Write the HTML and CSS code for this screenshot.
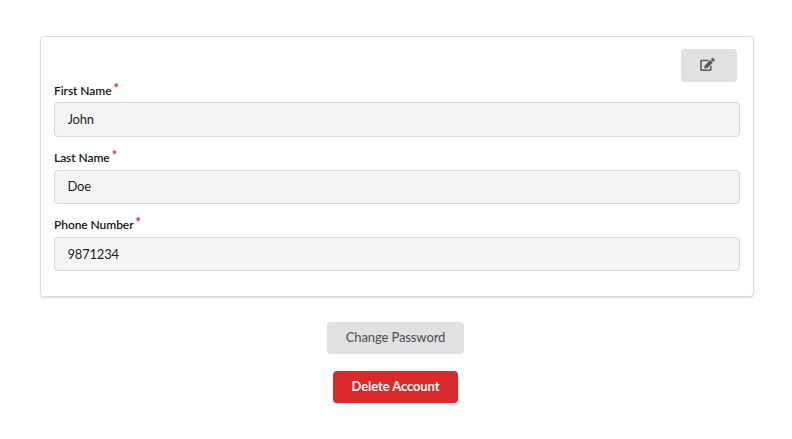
FILE: index.html
```html
<!DOCTYPE html>
<html lang="en">
<head>
<meta charset="utf-8">
<title>Account</title>
<link rel="stylesheet" href="styles.css">
</head>
<body>
<main class="page">
  <form class="card">
    <button type="button" class="button edit" aria-label="Edit">
      <svg class="icon" viewBox="0 0 576 512"><path d="M402.6 83.2l90.200 90.200c3.800 3.800 3.800 10 0 13.800L274.400 405.600l-92.800 10.300c-12.400 1.400-22.900-9.100-21.500-21.500l10.300-92.800L388.800 83.200c3.800-3.800 10-3.800 13.800 0zm162-22.900l-48.800-48.800c-15.200-15.200-39.900-15.200-55.200 0l-35.400 35.400c-3.800 3.800-3.800 10 0 13.800l90.200 90.200c3.800 3.800 10 3.800 13.800 0l35.400-35.400c15.200-15.300 15.200-40 0-55.200zM384 346.200V448H64V128h229.800c3.200 0 6.200-1.300 8.500-3.500l40-40c7.600-7.600 2.200-20.500-8.500-20.500H48C21.500 64 0 85.500 0 112v352c0 26.500 21.500 48 48 48h352c26.500 0 48-21.500 48-48V306.200c0-10.700-12.900-16-20.500-8.500l-40 40c-2.200 2.300-3.500 5.300-3.500 8.500z"/></svg>
    </button>
    <div class="field first">
      <label for="first">First Name<span class="required">*</span></label>
      <input id="first" value="John" readonly>
    </div>
    <div class="field">
      <label for="last">Last Name<span class="required">*</span></label>
      <input id="last" class="raised" value="Doe" readonly>
    </div>
    <div class="field">
      <label for="phone">Phone Number<span class="required">*</span></label>
      <input id="phone" value="9871234" readonly>
    </div>
  </form>
  <button type="button" class="button change">Change Password</button>
  <button type="button" class="button danger">Delete Account</button>
</main>
</body>
</html>
```
FILE: styles.css
```css
* { box-sizing: border-box; }
body { margin: 0; background: #fff; font-family: Lato, sans-serif; font-size: 13px; }
.page { display: flex; flex-direction: column; align-items: center; padding: 36px 38px 0 40px; }
.card { display: flex; flex-direction: column; width: 714px; height: 261px; padding: 12px 13px; margin-bottom: 25px; border: 1px solid #d9dadb; border-radius: 4px; box-shadow: 0 1px 2px rgba(34, 36, 38, .15); }
.field { display: flex; flex-direction: column; height: 67px; }
.first { height: 68px; }
.field label { height: 20px; line-height: 18px; font-size: 12px; font-weight: 600; letter-spacing: -.07px; color: rgba(0, 0, 0, .95); }
.field + .field label { line-height: 16px; }
.required { margin-left: 2px; color: #db2828; font-size: 13px; font-weight: 700; line-height: 0; position: relative; top: -2px; }
.field input { width: 686px; height: 34px; padding: 0 12.500px; border: 1px solid #d5d6d6; border-radius: 4px; background: #f4f4f4; color: rgba(0, 0, 0, .9); font: 13px Lato, sans-serif; letter-spacing: -.2px; outline: 0; }
.first input { height: 35px; padding-bottom: 1px; }
.field .raised { padding-bottom: 2px; }
.button { height: 32px; padding: 0 0 2px; border: 0; border-radius: 4px; background: #e0e1e2; color: rgba(0, 0, 0, .6); font: 700 13px Lato, sans-serif; }
.edit { display: flex; align-items: center; justify-content: center; width: 56px; height: 33px; padding: 0 3px 2px 0; align-self: flex-end; margin-right: 3px; flex-shrink: 0; }
.icon { width: 15px; height: 13px; fill: #5a5b5b; }
.change { width: 137px; margin-right: 3px; font-weight: 500; letter-spacing: -.12px; color: rgba(0, 0, 0, .66); }
.danger { width: 125px; margin: 17px 3px 0 0; background: #db2828; color: #fff; letter-spacing: -.1px; }
```
